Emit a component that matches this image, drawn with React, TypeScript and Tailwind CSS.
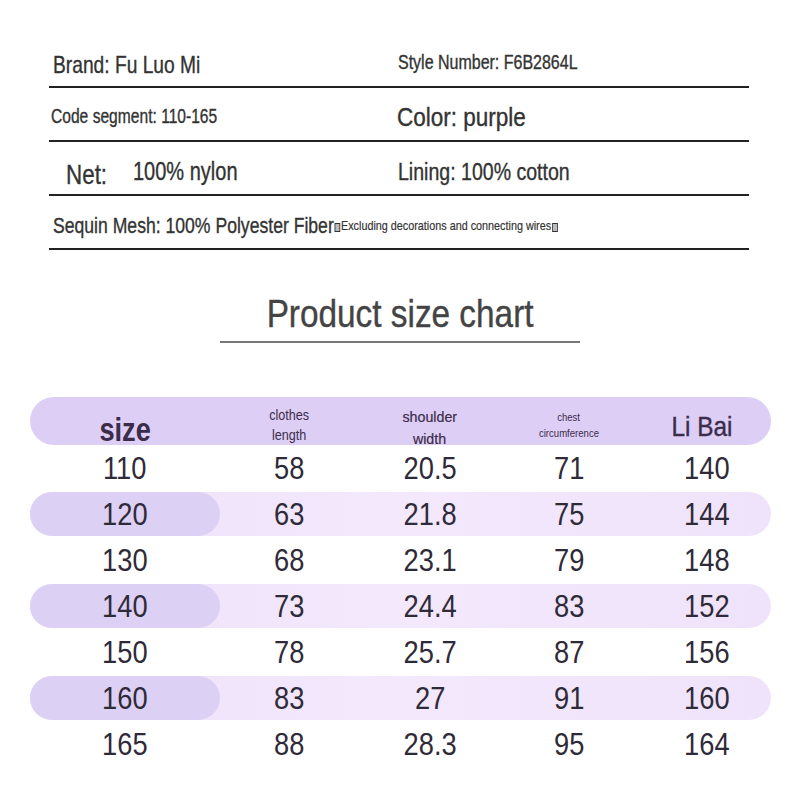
import React from "react";

const rows: string[][] = [
  ["110", "58", "20.5", "71", "140"],
  ["120", "63", "21.8", "75", "144"],
  ["130", "68", "23.1", "79", "148"],
  ["140", "73", "24.4", "83", "152"],
  ["150", "78", "25.7", "87", "156"],
  ["160", "83", "27", "91", "160"],
  ["165", "88", "28.3", "95", "164"],
];

const cols = "grid grid-cols-[190px_138px_144px_134px_135px] items-center";

// narrow look: Arial widths squeezed horizontally
const Narrow: React.FC<{ className?: string; children: React.ReactNode }> = ({ className = "", children }) => (
  <span
    className={`inline-block origin-left whitespace-nowrap [-webkit-text-stroke:0.35px_#333] ${className}`}
  >
    {children}
  </span>
);

const Tofu = () => (
  <span className="mx-px inline-block h-[9px] w-[7px] border border-[#333] bg-[#bbb] align-[1px] [-webkit-text-stroke:0]" />
);

const Num: React.FC<{ children: React.ReactNode }> = ({ children }) => (
  <span className="inline-block scale-x-[0.88] whitespace-nowrap text-[31px] leading-none text-[#2f2a38]">
    {children}
  </span>
);

export default function App() {
  return (
    <div className="w-[800px] h-[800px] bg-white font-['Liberation_Sans',Arial,sans-serif] text-[#333]">
      {/* spec rows */}
      <div className="ml-[49px] w-[700px] pt-[34px]">
        <div className="grid h-[54px] grid-cols-[345px_1fr] items-center border-b-2 border-[#222] pl-[4px] pt-[5px]">
          <Narrow className="scale-x-[0.8] text-[24px] pt-[4px]">Brand: Fu Luo Mi</Narrow>
          <Narrow className="scale-x-[0.82] text-[19.5px]">Style Number: F6B2864L</Narrow>
        </div>
        <div className="grid h-[54px] grid-cols-[346px_1fr] items-center border-b-2 border-[#222] pl-[2px] pt-[5px]">
          <Narrow className="scale-x-[0.8] text-[19.5px]">Code segment: 110-165</Narrow>
          <Narrow className="scale-x-[0.9] text-[25px] pt-[2px]">Color: purple</Narrow>
        </div>
        <div className="grid h-[54px] grid-cols-[345px_1fr] items-center border-b-2 border-[#222] pl-[4px] pt-[6px]">
          <div className="flex items-center">
            <Narrow className="scale-x-[0.8] ml-[13px] pt-[6px] text-[28px]">Net:</Narrow>
            <Narrow className="scale-x-[0.8] ml-[16px] text-[25px]">100% nylon</Narrow>
          </div>
          <Narrow className="scale-x-[0.85] text-[23px]">Lining: 100% cotton</Narrow>
        </div>
        <div className="flex h-[54px] items-center border-b-2 border-[#222] pl-[4px] pt-[6px]">
          <Narrow className="scale-x-[0.8] text-[22px]">
            Sequin Mesh: 100% Polyester Fiber
            <Tofu />
            <span className="text-[13.5px] align-[3px] [-webkit-text-stroke:0.2px_#333]">
              Excluding decorations and connecting wires
            </span>
            <Tofu />
          </Narrow>
        </div>
      </div>

      {/* title */}
      <div className="mt-[44px] flex flex-col items-center">
        <span className="inline-block scale-x-[0.855] whitespace-nowrap text-[39px] leading-none text-[#444] [-webkit-text-stroke:0.4px_#444]">
          Product size chart
        </span>
        <div className="mt-[8px] h-[2px] w-[360px] bg-[#777]" />
      </div>

      {/* size chart */}
      <div className="ml-[30px] mt-[54px] w-[741px]">
        <div className={`${cols} h-[48px] rounded-full bg-[#ddcef6] text-center text-[#3b2c4a]`}>
          <div className="translate-y-[9px]">
            <span className="inline-block scale-x-[0.8] text-[34px] font-bold leading-none">size</span>
          </div>
          <div className="flex translate-y-[4px] flex-col items-center text-[14px] leading-[20px]">
            <span className="scale-x-[0.9]">clothes</span>
            <span className="scale-x-[0.9]">length</span>
          </div>
          <div className="flex translate-y-[7px] flex-col items-center text-[15px] leading-[22px]">
            <span className="scale-x-[0.95] [-webkit-text-stroke:0.2px_#3b2c4a]">shoulder</span>
            <span className="scale-x-[0.95] [-webkit-text-stroke:0.2px_#3b2c4a]">width</span>
          </div>
          <div className="flex translate-y-[4px] flex-col items-center text-[10.5px] leading-[16px]">
            <span className="scale-x-[0.91]">chest</span>
            <span className="scale-x-[0.91]">circumference</span>
          </div>
          <div className="translate-y-[7px] pr-[2px]">
            <span className="inline-block scale-x-[0.87] text-[28px] leading-none [-webkit-text-stroke:0.4px_#3b2c4a]">
              Li Bai
            </span>
          </div>
        </div>

        {rows.map((r, i) => {
          const shaded = i % 2 === 1;
          return (
            <div key={r[0]} className="h-[46px] py-[1px]">
              <div
                className={`${cols} h-[44px] rounded-full ${
                  shaded ? "bg-gradient-to-r from-[#efe2fb] via-[#f3e8fc] to-[#efe3fb]" : ""
                }`}
              >
                {r.map((v, j) => (
                  <div
                    key={j}
                    className={`flex h-full items-center justify-center ${
                      shaded && j === 0 ? "rounded-full bg-[#dcd0f4]" : ""
                    } ${j === 4 ? "pl-[6px]" : ""}`}
                  >
                    <Num>{v}</Num>
                  </div>
                ))}
              </div>
            </div>
          );
        })}
      </div>
    </div>
  );
}
